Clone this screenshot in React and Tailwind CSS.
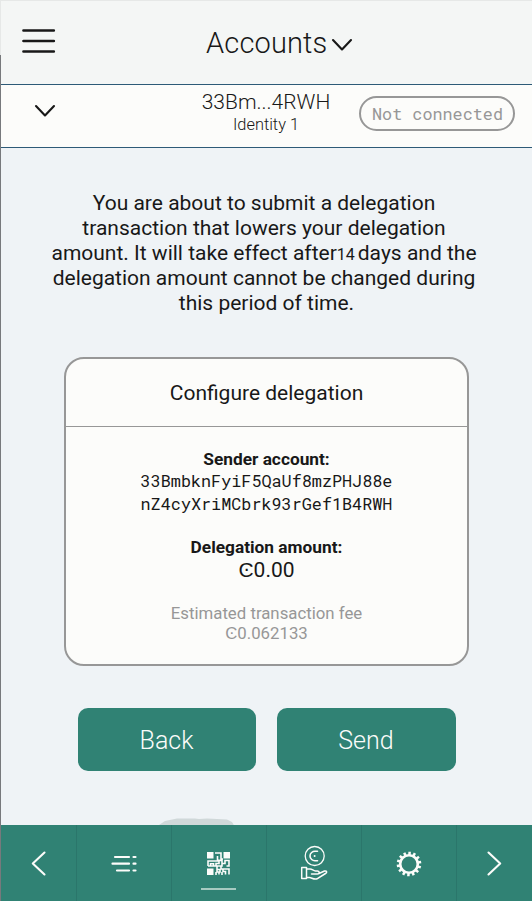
const Chevron = ({ className }) => (
  <svg className={className} width="22" height="14" viewBox="0 0 22 14" fill="none" stroke="#181818" strokeWidth="2.100" strokeLinecap="round" strokeLinejoin="round">
    <path d="M2 2 L11 11.500 L20 2" />
  </svg>
);

const Arrow = ({ d }) => (
  <svg width="16" height="26" viewBox="0 0 16 26" fill="none" stroke="#fcfcfa" strokeWidth="2.100" strokeLinecap="round" strokeLinejoin="round">
    <path d={d} />
  </svg>
);

const ListIcon = () => (
  <svg className="mt-px mr-px" width="26" height="18" viewBox="0 0 26 18" fill="none" stroke="#fcfcfa" strokeWidth="2.200" strokeLinecap="round">
    <path d="M4 2H18M22.500 2H24.500M1.500 8.700H18M22.500 8.700H24.500M6 15.500H18M22.500 15.500H24.500" />
  </svg>
);

const CodeIcon = () => (
  <svg width="23" height="23" viewBox="0 0 23 23" fill="none" stroke="#fcfcfa" strokeWidth="1.4">
    <path d="M0 0H6.500V6.500H0ZM16.500 0H23V6.500H16.500ZM0 16.500H6.500V23H0Z" fill="#fcfcfa" stroke="none" />
    <path d="M8 1H14V7H16M10.500 4V9H1V14M3.500 14V11.700H6.500V14H3.500M1 14H9V11.500H12V7.500M12 8.500H15V11.500H18V8.500H22V14H19.500M15 11.500V14H10V17.500H13V20H10V16.500M9 20V23M12 22.500V20M14 14.500V17H22V22.500M16 17V19.500H18.500V22.500M15 20V23" strokeWidth="1.600" />
  </svg>
);

const HandIcon = () => (
  <svg width="28" height="36" viewBox="0 0 28 36" fill="none" stroke="#fcfcfa" strokeWidth="1.3" strokeLinejoin="round" strokeLinecap="round">
    <circle cx="14.700" cy="11" r="9.500" />
    <path d="M17.500 6.300H15.500A5 4.700 0 0 0 10 11A5 4.700 0 0 0 15.500 15.700H17.500" strokeWidth="1.600" />
    <circle cx="14.600" cy="11" r="1" fill="#fcfcfa" stroke="none" />
    <path d="M1.700 22.500H6.500V33.500H1.700ZM6.500 24H9.500C12 23.500 13 25.800 15.500 26H17.500C20 26.500 19.500 29 17.500 29H11.500M18.500 28.800L24.500 26C27 25.500 27.300 27.500 25.500 28.500L17 33.800C14 35 11.500 32.500 9.500 32.500H6.500" strokeWidth="1.500" />
  </svg>
);

const teeth = [0, 1, 2, 3, 4, 5, 6, 7, 8, 9, 10, 11, 12, 13];

const GearIcon = () => (
  <svg className="mt-px" width="26" height="26" viewBox="0 0 26 26" fill="none" stroke="#fcfcfa">
    <circle cx="13" cy="13" r="8.800" strokeWidth="2.600" />
    {teeth.map((i) => (
      <path key={i} d="M13 0.700V4" strokeWidth="2.500" transform={`rotate(${(i * 360) / 14 + 3} 13 13)`} />
    ))}
  </svg>
);

const Tab = ({ children, className = "" }) => (
  <div className={`flex items-center justify-center ${className}`}>{children}</div>
);

export default function App() {
  return (
    <div className="flex h-[901px] w-[532px] flex-col overflow-hidden bg-[#eff3f6] font-['Roboto',sans-serif] text-[#181818]">
      <div className="h-px shrink-0 bg-[#e6e8e7]" />
      <div className="flex min-h-0 flex-1">
        <div className="flex w-px shrink-0 flex-col">
          <div className="h-[54px] bg-[#e6e8e7]" />
          <div className="flex-1 bg-[#77797c]" />
        </div>
        <div className="flex min-w-0 flex-1 flex-col">
          <header className="flex h-[84px] shrink-0 border-b border-[#2d5a77] bg-[#f4f6f5]">
            <div className="w-[200px] pt-[27px] pl-[21px]">
              <svg width="34" height="26" viewBox="0 0 34 26" fill="none" stroke="#181818" strokeWidth="2.700" strokeLinecap="round">
                <path d="M1.500 2.500H31.800M1.500 13H31.800M1.500 23.500H31.800" />
              </svg>
            </div>
            <h1 className="flex h-[84px] items-center pl-[5px] text-[29px] font-light leading-none tracking-[0.15px] whitespace-nowrap">
              <span>Accounts</span>
              <Chevron className="mt-[3px] ml-[4px]" />
            </h1>
          </header>

          <div className="flex h-[63px] shrink-0 border-b border-[#2d5a77] bg-[#fcfcfa]">
            <div className="w-[190px] pt-[19px] pl-[33px]">
              <Chevron />
            </div>
            <div className="flex w-[150px] flex-col items-center pt-[4px] font-light">
              <div className="text-[21px] leading-[26px] whitespace-nowrap">33Bm...4RWH</div>
              <div className="text-[16.400px] leading-[19px]">Identity 1</div>
            </div>
            <div className="mt-[11px] ml-[18px] flex h-[35px] w-[156px] items-center justify-center rounded-full border-2 border-[#979797] pl-px font-['Roboto_Mono','Liberation_Mono',monospace] text-[16.8px] whitespace-nowrap text-[#979797]">
              Not connected
            </div>
          </div>

          <main className="flex min-h-0 flex-1 flex-col items-center overflow-hidden">
            <p className="mt-[43px] text-center text-[21px] leading-[25px] whitespace-nowrap">
              <span className="block pr-[5px]">You are about to submit a delegation</span>
              <span className="block pr-[5px]">transaction that lowers your delegation</span>
              <span className="block h-[25px] pr-[5px]">
                amount. It will take effect after<span className="text-[16px]">14</span>
                <span className="ml-[3px]">days and the</span>
              </span>
              <span className="block pr-[5px]">delegation amount cannot be changed during</span>
              <span className="block">this period of time.</span>
            </p>

            <section className="mt-[41px] flex h-[309px] w-[405px] shrink-0 flex-col rounded-[20px] border-2 border-[#979797] bg-[#fcfcfa] text-center">
              <h2 className="flex h-[68px] items-center justify-center border-b border-[#979797] pt-[2px] text-[21px]">Configure delegation</h2>
              <div className="mt-[22px] text-[17.300px] font-bold leading-[20px]">Sender account:</div>
              <div className="font-['Roboto_Mono','Liberation_Mono',monospace] text-[16.8px] leading-[23px]">
                33BmbknFyiF5QaUf8mzPHJ88e
                <br />
                nZ4cyXriMCbrk93rGef1B4RWH
              </div>
              <div className="mt-[22px] text-[17.300px] font-bold leading-[20px]">Delegation amount:</div>
              <div className="mt-px text-[21px] leading-[25px]">Ͼ0.00</div>
              <div className="mt-[20px] text-[16.8px] leading-[20px] text-[#979797]">
                Estimated transaction fee
                <br />
                Ͼ0.062133
              </div>
            </section>

            <div className="mt-[42px] flex shrink-0 gap-[21px] text-[25px] font-light text-[#fcfcfa]">
              <button className="h-[63px] w-[178px] rounded-[10px] bg-[#308274] pt-[2px]">Back</button>
              <button className="h-[63px] w-[179px] rounded-[10px] bg-[#308274] pt-[2px]">Send</button>
            </div>
            <svg className="mt-[46px] mr-[139px] shrink-0" width="76" height="10" viewBox="0 0 76 10">
              <path d="M0 8L6 4L18 1.500H36L40 2L48 1.500L68 2.500L73 5L76 10H0Z" fill="#d0d8d9" />
            </svg>
          </main>

          <nav className="flex h-[76px] shrink-0 bg-[#308274]">
            <Tab className="w-[76px] border-r border-[#2b766b]">
              <Arrow d="M13.500 2.500L1.800 13.500L13.500 24.500" />
            </Tab>
            <Tab className="w-[95px] border-r border-[#2b766b]">
              <ListIcon />
            </Tab>
            <div className="flex w-[95px] flex-col items-center border-r border-[#2b766b] pt-[27px] pr-[2px]">
              <CodeIcon />
              <div className="mt-[13px] h-[2px] w-[35px] bg-[#a6cac1]" />
            </div>
            <Tab className="w-[95px] border-r border-[#2b766b]">
              <HandIcon />
            </Tab>
            <Tab className="w-[95px] border-r border-[#2b766b]">
              <GearIcon />
            </Tab>
            <Tab className="w-[75px]">
              <Arrow d="M1.500 2.500L13.200 13.500L1.500 24.500" />
            </Tab>
          </nav>
        </div>
      </div>
    </div>
  );
}
